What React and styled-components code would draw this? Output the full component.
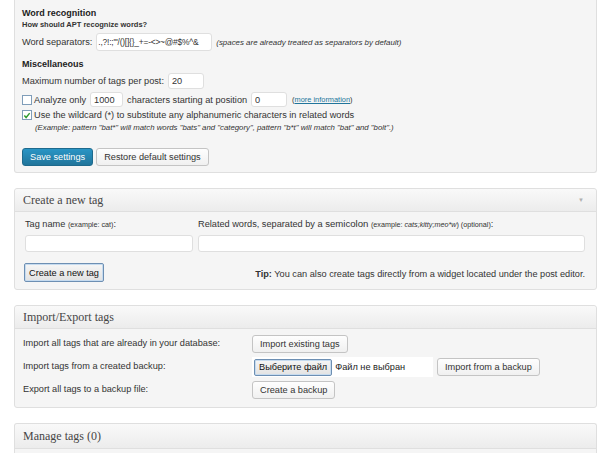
import React from 'react';
import styled, { createGlobalStyle } from 'styled-components';

const GlobalStyle = createGlobalStyle`
	html, body {
		margin: 0;
		padding: 0;
		background: #ffffff;
	}
	body {
		font-family: "Liberation Sans", Arial, sans-serif;
		font-size: 9px;
		color: #333333;
	}
`;

const App = () => (
	<Page>
		<GlobalStyle />
		<Panel $cut>
			<Settings>
				<Heading>Word recognition</Heading>
				<SubHeading>How should APT recognize words?</SubHeading>
				<Row $h={18} $mt={3}>
					<Label>Word separators:</Label>
					<Input $w={116} $h={18} $tight defaultValue={`.,?!:;"'/()[]{}_+=-<>~@#$%^&`} />
					<Hint>(spaces are already treated as separators by default)</Hint>
				</Row>
				<Heading $mt={6}>Miscellaneous</Heading>
				<Row $h={16} $mt={2}>
					<Label>Maximum number of tags per post:</Label>
					<Input $w={36} $h={16} defaultValue="20" />
				</Row>
				<Row $h={15} $mt={3}>
					<Check />
					<Label>Analyze only</Label>
					<Input $w={33} $h={15} defaultValue="1000" />
					<Label>characters starting at position</Label>
					<Input $w={36} $h={15} defaultValue="0" />
					<Small>
						(<MoreLink href="#">more information</MoreLink>)
					</Small>
				</Row>
				<Row $h={12} $mt={2}>
					<Check $checked>
						<svg width="9" height="9" viewBox="0 0 9 9">
							<path d="M1.5 4.5 L3.5 6.8 L7.5 1.8" fill="none" stroke="#2e9a2e" strokeWidth="1.6" />
						</svg>
					</Check>
					<Label>Use the wildcard (*) to substitute any alphanumeric characters in related words</Label>
				</Row>
				<Example>
					(Example: pattern "bat*" will match words "bats" and "category", pattern "b*t" will match "bat" and "bolt".)
				</Example>
				<ButtonRow>
					<PrimaryButton>Save settings</PrimaryButton>
					<Button $h={18}>Restore default settings</Button>
				</ButtonRow>
			</Settings>
		</Panel>

		<Panel>
			<PanelHeader>
				<PanelTitle>Create a new tag</PanelTitle>
				<Toggle>▼</Toggle>
			</PanelHeader>
			<CreateBody>
				<FieldGrid>
					<FieldLabel>
						Tag name <Note>(example: cat)</Note>:
					</FieldLabel>
					<FieldLabel>
						Related words, separated by a <Big>semicolon</Big> <Note>(example: <i>cats;kitty;meo*w</i>) (optional)</Note>:
					</FieldLabel>
					<Input $h={17} />
					<Input $h={17} />
				</FieldGrid>
				<CreateFooter>
					<FocusButton $h={19}>Create a new tag</FocusButton>
					<Tip>
						<b>Tip:</b> You can also create tags directly from a widget located under the post editor.
					</Tip>
				</CreateFooter>
			</CreateBody>
		</Panel>

		<Panel>
			<PanelHeader>
				<PanelTitle>Import/Export tags</PanelTitle>
			</PanelHeader>
			<ImportBody>
				<ImportLabel>Import all tags that are already in your database:</ImportLabel>
				<Controls>
					<Button $h={18}>Import existing tags</Button>
				</Controls>
				<ImportLabel>Import tags from a created backup:</ImportLabel>
				<Controls>
					<FileBox>
						<FocusButton $h={17}>Выберите файл</FocusButton>
						<FileName>Файл не выбран</FileName>
					</FileBox>
					<Button $h={18}>Import from a backup</Button>
				</Controls>
				<ImportLabel>Export all tags to a backup file:</ImportLabel>
				<Controls>
					<Button $h={18}>Create a backup</Button>
				</Controls>
			</ImportBody>
		</Panel>

		<Panel $open>
			<PanelHeader $h={24}>
				<PanelTitle>Manage tags (0)</PanelTitle>
			</PanelHeader>
			<OpenBody />
		</Panel>
	</Page>
);

export default App;

const Page = styled.div`
	width: 583px;
	padding-left: 14px;
	padding-bottom: 20px;
	display: flex;
	flex-direction: column;
	gap: 15px;
`;

const Panel = styled.div`
	background: #f5f5f5;
	border: 1px solid #dfdfdf;
	border-top: ${(p) => (p.$cut ? 'none' : '1px solid #dfdfdf')};
	border-bottom: ${(p) => (p.$open ? 'none' : '1px solid #dfdfdf')};
	border-radius: ${(p) => (p.$cut ? '0 0 3px 3px' : '3px')};
`;

const Settings = styled.div`
	padding: 0 8px 6px 7px;
`;

const Heading = styled.div`
	font-weight: bold;
	font-size: 9px;
	line-height: 14px;
	color: #222;
	margin-top: ${(p) => p.$mt ?? 6}px;
`;

const SubHeading = styled.div`
	font-weight: bold;
	font-size: 7.5px;
	line-height: 10px;
	color: #333;
`;

const Row = styled.div`
	display: flex;
	align-items: center;
	gap: 4px;
	height: ${(p) => p.$h}px;
	margin-top: ${(p) => p.$mt}px;
	white-space: nowrap;
`;

const Label = styled.span`
	font-size: 9.2px;
	color: #333;
`;

const Input = styled.input`
	box-sizing: border-box;
	width: ${(p) => (p.$w ? `${p.$w}px` : '100%')};
	height: ${(p) => p.$h}px;
	border: 1px solid #dfdfdf;
	border-radius: 3px;
	background: #fff;
	padding: ${(p) => (p.$tight ? '0 1px' : '0 3px')};
	font-family: "Liberation Sans", Arial, sans-serif;
	font-size: ${(p) => (p.$tight ? '8.4px' : '9.2px')};
	letter-spacing: ${(p) => (p.$tight ? '-0.2px' : '0')};
	color: #333;
	outline: none;
`;

const Hint = styled.span`
	font-size: 7.9px;
	font-style: italic;
	color: #333;
`;

const Small = styled.span`
	font-size: 7.4px;
	color: #333;
	margin-left: 1px;
`;

const MoreLink = styled.a`
	color: #21759b;
	text-decoration: underline;
`;

const Check = styled.span`
	box-sizing: border-box;
	width: 10px;
	height: 10px;
	border: 1px solid #7f9db9;
	background: #fff;
	display: inline-flex;
	align-items: center;
	justify-content: center;
	margin-right: -2px;
`;

const Example = styled.div`
	font-size: 7.8px;
	font-style: italic;
	line-height: 10px;
	margin-top: 2px;
	padding-left: 13px;
	color: #333;
	white-space: nowrap;
`;

const ButtonRow = styled.div`
	display: flex;
	gap: 3px;
	margin-top: 15px;
`;

const Button = styled.button`
	box-sizing: border-box;
	height: ${(p) => p.$h}px;
	padding: 0 7px;
	border: 1px solid #c4c4c4;
	border-radius: 3px;
	background: linear-gradient(#fefefe, #f0f0f0);
	font-family: "Liberation Sans", Arial, sans-serif;
	font-size: 9.2px;
	color: #333;
	white-space: nowrap;
	cursor: pointer;
`;

const PrimaryButton = styled(Button)`
	height: 18px;
	padding: 0 7px;
	border-color: #1e6a8d;
	background: linear-gradient(#2a95c5, #21759b);
	color: #fff;
`;

const FocusButton = styled(Button)`
	border-color: #6d8fb3;
	border-radius: 2px;
	background: linear-gradient(#f6f6f6, #e2e2e2);
	color: #111;
	padding: 0 4px;
	box-shadow: 0 0 0 1px #c6dbef inset;
`;

const PanelHeader = styled.div`
	display: flex;
	align-items: center;
	justify-content: space-between;
	height: ${(p) => p.$h ?? 22}px;
	padding: 0 12px 0 8px;
	background: linear-gradient(#f9f9f9, #ececec);
	border-bottom: 1px solid #dfdfdf;
	border-radius: 3px 3px 0 0;
`;

const PanelTitle = styled.span`
	font-family: "Liberation Serif", Georgia, serif;
	font-size: 12px;
	color: #464646;
`;

const Toggle = styled.span`
	font-size: 6px;
	color: #b0b0b0;
`;

const CreateBody = styled.div`
	padding: 6px 11px 7px 10px;
`;

const FieldGrid = styled.div`
	display: grid;
	grid-template-columns: 168px 1fr;
	column-gap: 5px;
	row-gap: 4px;
`;

const FieldLabel = styled.div`
	font-size: 9.2px;
	line-height: 12px;
	color: #333;
	white-space: nowrap;
`;

const Note = styled.span`
	font-size: 7.2px;
`;

const Big = styled.span`
	font-size: 9.6px;
`;

const CreateFooter = styled.div`
	display: flex;
	align-items: center;
	justify-content: space-between;
	margin-top: 11px;
	margin-left: -1px;
`;

const Tip = styled.span`
	font-size: 9.2px;
	color: #333;
	margin-top: 3px;
`;

const ImportBody = styled.div`
	display: grid;
	grid-template-columns: 229px 1fr;
	row-gap: 4px;
	align-items: center;
	padding: 6px 8px 8px 8px;
`;

const ImportLabel = styled.span`
	font-size: 9.2px;
	color: #333;
	margin-top: -2px;
`;

const Controls = styled.div`
	display: flex;
	align-items: center;
	gap: 4px;
`;

const FileBox = styled.span`
	display: inline-flex;
	align-items: center;
	box-sizing: border-box;
	width: 181px;
	height: 20px;
	padding-left: 2px;
	background: #fff;
`;

const FileName = styled.span`
	font-size: 9.2px;
	color: #222;
	margin-left: 3px;
`;

const OpenBody = styled.div`
	height: 20px;
`;
